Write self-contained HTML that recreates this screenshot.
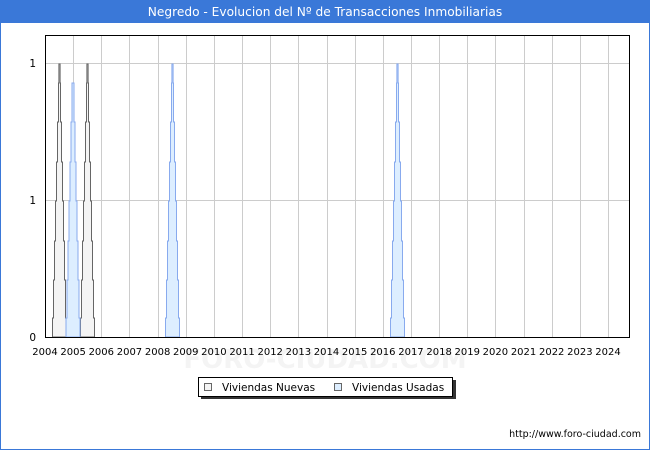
<html><head><style>
body{margin:0;width:650px;height:450px;background:#fff;font-family:"DejaVu Sans","Liberation Sans",sans-serif;overflow:hidden}
</style></head><body>
<svg width="650" height="450" xmlns="http://www.w3.org/2000/svg" font-family="DejaVu Sans, Liberation Sans, sans-serif">
<rect x="0" y="0" width="650" height="22" fill="#3a78d8"/>
<text x="325" y="16" text-anchor="middle" fill="#fff" font-size="12.2">Negredo - Evolucion del Nº de Transacciones Inmobiliarias</text>
<rect x="0.5" y="22.5" width="649" height="427" fill="none" stroke="#3a78d8"/>
<g stroke="#cccccc" stroke-width="1" id="g"></g>
<text x="325" y="368" text-anchor="middle" font-size="26" fill="#f4f4f4" font-weight="bold">FORO-CIUDAD.COM</text>
<g id="spikes"></g>
<rect x="45.5" y="35.5" width="584" height="302" fill="none" stroke="#000"/>
<g font-size="10.5" fill="#000">
<text x="36" y="67" text-anchor="end">1</text>
<text x="36" y="204" text-anchor="end">1</text>
<text x="36" y="341" text-anchor="end">0</text>
</g>
<g id="yl" font-size="10" text-anchor="middle"></g>
<rect x="201" y="380" width="255" height="19" fill="#333"/>
<rect x="198.5" y="377.5" width="254" height="19" fill="#fff" stroke="#000"/>
<rect x="204.5" y="383.5" width="7" height="7" fill="#f4f4f4" stroke="#666"/>
<text x="222" y="391" font-size="10.5">Viviendas Nuevas</text>
<rect x="334.5" y="383.5" width="7" height="7" fill="#ddeeff" stroke="#666"/>
<text x="352" y="391" font-size="10.5">Viviendas Usadas</text>
<text x="641" y="437" text-anchor="end" font-size="9.5">http://www.foro-ciudad.com</text>
</svg>
<script>
var ns="http://www.w3.org/2000/svg",g=document.getElementById('g'),s=document.getElementById('spikes'),yl=document.getElementById('yl');
function X(y){return 45+28.15*(y-2004);}
for(var y=2004;y<=2024;y++){var x=Math.round(X(y))+0.5;var l=document.createElementNS(ns,'line');l.setAttribute('x1',x);l.setAttribute('x2',x);l.setAttribute('y1',36);l.setAttribute('y2',337);g.appendChild(l);
var t=document.createElementNS(ns,'text');t.setAttribute('x',X(y));t.setAttribute('y',355);t.textContent=y;yl.appendChild(t);}
[63.5,200.5].forEach(function(y){var l=document.createElementNS(ns,'line');l.setAttribute('x1',46);l.setAttribute('x2',630);l.setAttribute('y1',y);l.setAttribute('y2',y);g.appendChild(l);});
var lv=[337,318,280,241,201,162,122,83,64];
function spike(c,top,fill,stroke){var L=[],R=[];for(var i=0;i<top;i++){var hw=7-i;if(hw<0.5)hw=0.6;L.push([c-hw,lv[i]],[c-hw,lv[i+1]]);}
for(var i=top-1;i>=0;i--){var hw=7-i;if(hw<0.5)hw=0.6;R.push([c+hw,lv[i+1]],[c+hw,lv[i]]);}
var p=document.createElementNS(ns,'polygon');p.setAttribute('points',L.concat(R).map(function(a){return a.join(',')}).join(' '));p.setAttribute('fill',fill);p.setAttribute('stroke',stroke);s.appendChild(p);}
spike(59.5,8,'#f4f4f4','#666');spike(87.5,8,'#f4f4f4','#666');
spike(73,7,'#ddeeff','#88aaee');spike(172.5,8,'#ddeeff','#88aaee');spike(397.5,8,'#ddeeff','#88aaee');
</script>
</body></html>
